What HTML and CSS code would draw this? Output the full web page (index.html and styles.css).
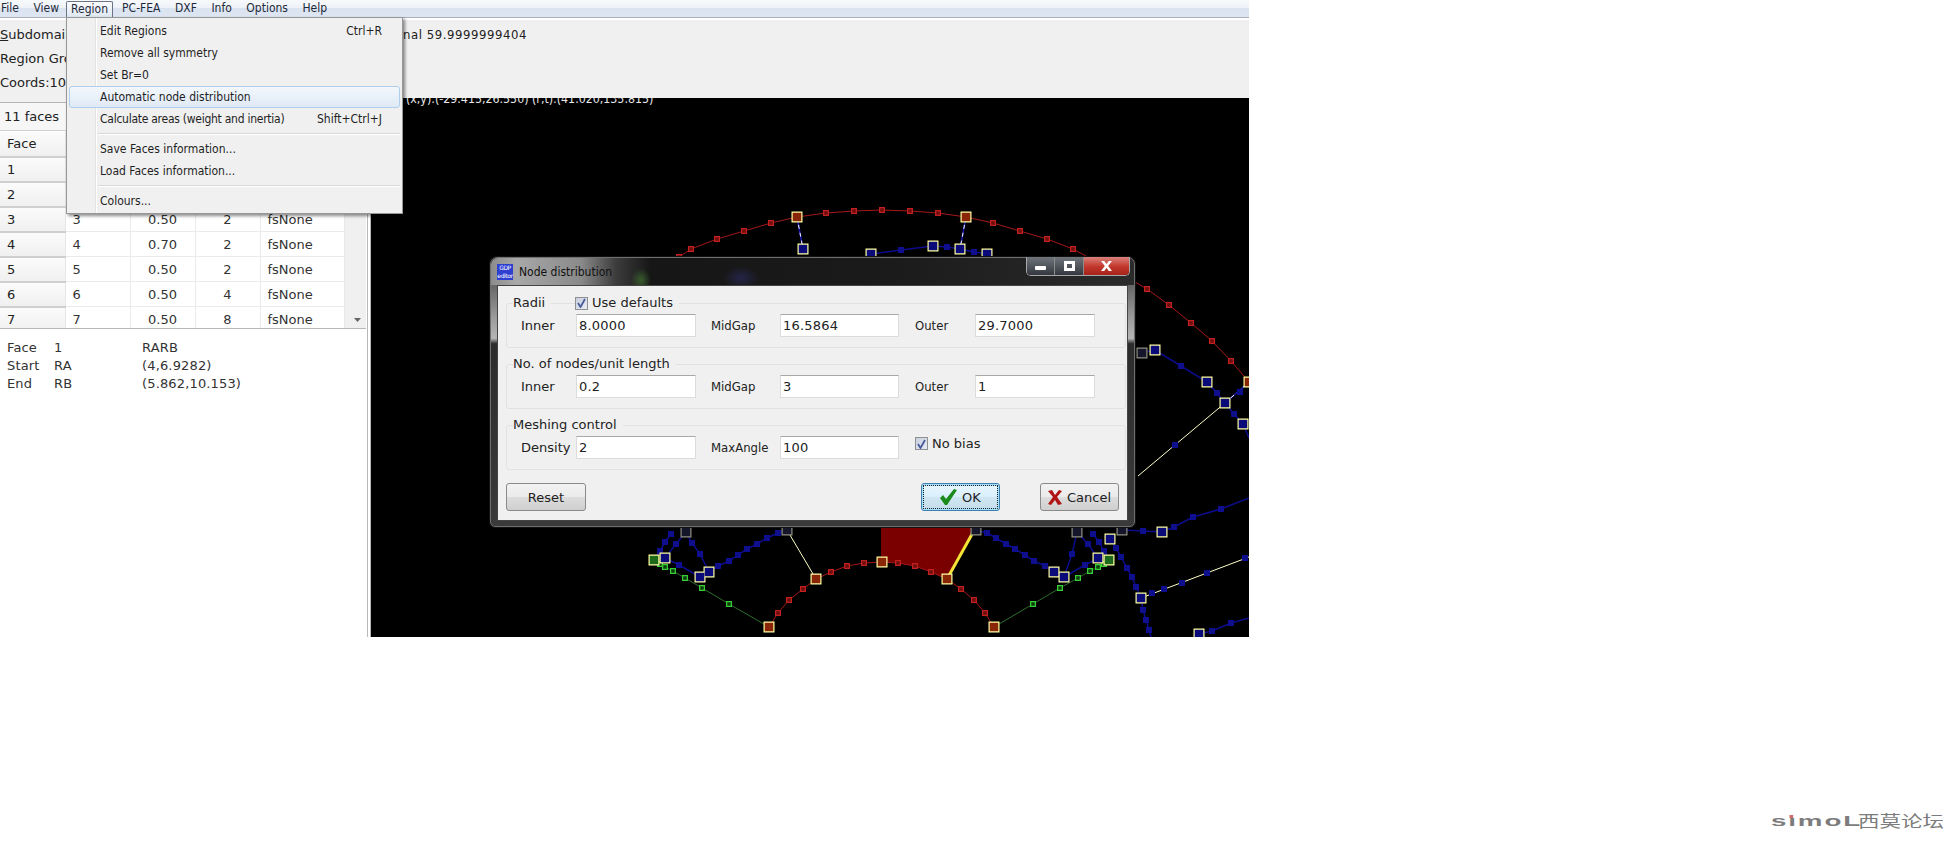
FILE: index.html
```html
<!DOCTYPE html>
<html lang="en">
<head>
<meta charset="utf-8">
<title>Node distribution</title>
<link rel="stylesheet" href="styles.css">
</head>
<body>
<div class="app">
  <nav class="menubar">
    <span class="mi">File</span><span class="mi">View</span><span class="mi active">Region</span><span class="mi">PC-FEA</span><span class="mi">DXF</span><span class="mi">Info</span><span class="mi">Options</span><span class="mi">Help</span>
  </nav>
  <section class="toppanel">
    <div class="toprow first"><span><u>S</u>ubdomains</span><span class="nominal">Nominal 59.9999999404</span></div>
    <div class="toprow">Region Groups</div>
    <div class="toprow">Coords:10</div>
  </section>
  <div class="work">
    <aside class="side">
      <div class="facecount">11 faces</div>
      <div class="gridwrap">
        <table class="grid">
          <tr class="hdr"><th>Face</th><td></td><td></td><td></td><td></td></tr>
          <tr><th>1</th><td>1</td><td class="c">0.50</td><td class="c">2</td><td>fsNone</td></tr>
          <tr><th>2</th><td>2</td><td class="c">0.50</td><td class="c">2</td><td>fsNone</td></tr>
          <tr><th>3</th><td>3</td><td class="c">0.50</td><td class="c">2</td><td>fsNone</td></tr>
          <tr><th>4</th><td>4</td><td class="c">0.70</td><td class="c">2</td><td>fsNone</td></tr>
          <tr><th>5</th><td>5</td><td class="c">0.50</td><td class="c">2</td><td>fsNone</td></tr>
          <tr><th>6</th><td>6</td><td class="c">0.50</td><td class="c">4</td><td>fsNone</td></tr>
          <tr><th>7</th><td>7</td><td class="c">0.50</td><td class="c">8</td><td>fsNone</td></tr>
        </table>
        <div class="scrollbar"><svg class="sc-arrow" width="7" height="4" viewBox="0 0 7 4"><path d="M0 0h7L3.500 4z"/></svg></div>
      </div>
      <div class="info">
        <span>Face</span><span>1</span><span>RARB</span>
        <span>Start</span><span>RA</span><span>(4,6.9282)</span>
        <span>End</span><span>RB</span><span>(5.862,10.153)</span>
      </div>
    </aside>
    <div class="canvas">
      <div class="readout">(x,y):(-29.415,26.550) (r,t):(41.020,135.815)</div>
      <svg class="drawing" width="878" height="539" viewBox="371 98 878 539">
        <defs>
          <path id="smallRed" d="M679 257h0M691 249h0M717 239h0M744 231h0M771 223h0M826 213h0M854 211h0M882 210h0M910 211h0M938 213h0M993 223h0M1020 231h0M1047 239h0M1073 249h0M1147 289h0M1169 305h0M1191 323h0M1212 341h0M1231 361h0M778 613h0M789 600h0M803 589h0M831 572h0M847 566h0M864 563h0M898 563h0M915 566h0M931 572h0M961 589h0M974 600h0M985 613h0"/>
          <path id="smallGreen" d="M729 604h0M702 588h0M685 578h0M673 571h0M665 567h0M660 564h0M656 561h0M1033 604h0M1060 588h0M1078 578h0M1090 571h0M1098 567h0M1104 564h0"/>
          <path id="smallBlue" d="M901 250h0M947 247h0M974 252h0M1181 366h0M1217 393h0M1234 414h0M1240 392h0M1175 445h0M1174 527h0M1193 517h0M1221 509h0M1143 531h0M1116 548h0M1121 557h0M1127 568h0M1132 577h0M1136 587h0M1143 610h0M1146 620h0M1149 630h0M1152 593h0M1164 589h0M1182 583h0M1207 573h0M1245 558h0M1212 631h0M1231 623h0M718 566h0M729 561h0M738 555h0M747 549h0M757 544h0M767 538h0M778 533h0M679 565h0M692 543h0M700 554h0M676 544h0M671 534h0M665 542h0M660 551h0M987 533h0M996 538h0M1006 544h0M1015 549h0M1025 555h0M1034 561h0M1045 566h0M1088 544h0M1093 534h0M1099 542h0M1104 551h0M1072 554h0M1085 565h0"/>
          <path id="bigBlue" d="M803 249h0M960 249h0M871 254h0M933 246h0M987 254h0M1155 350h0M1207 382h0M1225 403h0M1243 424h0M1162 532h0M1110 539h0M1141 598h0M1199 634h0M665 558h0M700 577h0M709 572h0M1054 572h0M1064 577h0M1098 558h0"/>
          <path id="bigRed" d="M797 217h0M966 217h0M1249 382h0M769 627h0M816 579h0M882 562h0M947 579h0M994 627h0"/>
          <path id="bigGreen" d="M654 560h0M1109 560h0"/>
          <path id="bigGrey" d="M1142 353h0M686 532h0M787 530h0M976 530h0M1077 532h0M1122 530h0"/>
        </defs>
        <path class="fillred" d="M881 527V562L898 563 915 566 931 572 947 579 975 527Z"/>
        <path class="ln red" d="M679 257L691 249 717 239 744 231 771 223 797 217 826 213 854 211 882 210 910 211 938 213 966 217 993 223 1020 231 1047 239 1073 249 1086 256M1135 282L1147 289 1169 305 1191 323 1212 341 1231 361 1249 382M769 627L778 613 789 600 803 589 816 579 831 572 847 566 864 563 882 562 898 563 915 566 931 572 947 579 961 589 974 600 985 613 994 627"/>
        <path class="ln green" d="M769 627L729 604 702 588 685 578 673 571 665 567 660 564 654 560M994 627L1033 604 1060 588 1078 578 1090 571 1098 567 1104 564 1109 560"/>
        <path class="ln blue" d="M871 254L901 250 933 246 947 247 960 249 974 252 987 254M1142 353L1155 350 1181 366 1207 382 1217 393 1225 403 1234 414 1243 424 1249 438M1122 530L1143 531 1162 532 1174 527 1193 517 1221 509 1249 498M1110 539L1116 548 1121 557 1127 568 1132 577 1136 587 1141 598 1143 610 1146 620 1149 630 1151 637M1199 634L1212 631 1231 623 1249 618M709 572L718 566 729 561 738 555 747 549 757 544 767 538 778 533 787 530M686 532L692 543 700 554 709 572M665 558L679 565 700 577M686 532L676 544 665 558M654 560L660 551 665 542 671 534M976 530L987 533 996 538 1006 544 1015 549 1025 555 1034 561 1045 566 1054 572M1077 532L1072 554 1064 577M1077 532L1088 544 1098 558M1064 577L1085 565 1098 558M1110 560L1104 551 1099 542 1093 534"/>
        <path class="ln dashbase" d="M797 217L803 249M966 217L960 249M1225 403L1249 382"/>
        <path class="ln dash" d="M797 217L803 249M966 217L960 249M1225 403L1249 382"/>
        <path class="ln white" d="M1225 403L1138 476M1141 598L1249 557M787 530L816 579"/>
        <path class="ln thick" d="M976 527L947 579"/>
        <use class="s-out red" href="#smallRed"/><use class="s-in red" href="#smallRed"/>
        <use class="s-out green" href="#smallGreen"/><use class="s-in green" href="#smallGreen"/>
        <use class="s-out blue" href="#smallBlue"/><use class="s-in blue" href="#smallBlue"/>
        <use class="b-out" href="#bigBlue"/><use class="b-in blue" href="#bigBlue"/>
        <use class="b-out" href="#bigRed"/><use class="b-in red" href="#bigRed"/>
        <use class="b-out" href="#bigGreen"/><use class="b-in green" href="#bigGreen"/>
        <use class="b-out grey" href="#bigGrey"/><use class="b-in grey" href="#bigGrey"/>
      </svg>
    </div>
  </div>

  <div class="dropdown">
    <div class="dd"><span>Edit Regions</span><span>Ctrl+R</span></div>
    <div class="dd"><span>Remove all symmetry</span></div>
    <div class="dd"><span>Set Br=0</span></div>
    <div class="dd hot"><span>Automatic node distribution</span></div>
    <div class="dd"><span class="tight">Calculate areas (weight and inertia)</span><span>Shift+Ctrl+J</span></div>
    <div class="sep"></div>
    <div class="dd"><span>Save Faces information...</span></div>
    <div class="dd"><span>Load Faces information...</span></div>
    <div class="sep"></div>
    <div class="dd"><span>Colours...</span></div>
  </div>

  <div class="dialog">
    <div class="titlebar">
      <div class="appicon"><span>GDP</span><span>editor</span></div>
      <div class="title">Node distribution</div>
      <div class="winbtns">
        <div class="wb wb-min"><svg width="11" height="4" viewBox="0 0 11 4"><rect width="11" height="4" rx="1"/></svg></div>
        <div class="wb wb-max"><svg width="11" height="10" viewBox="0 0 11 10"><path fill-rule="evenodd" d="M0 0h11v10H0zM3 3v4h5V3z"/></svg></div>
        <div class="wb wb-close"><svg width="11" height="10" viewBox="0 0 11 10"><path d="M0 0h3.200L5.500 3 7.800 0H11L7.200 5 11 10H7.800L5.500 7 3.200 10H0L3.800 5z"/></svg></div>
      </div>
    </div>
    <div class="client">
      <fieldset class="group">
        <legend>Radii</legend>
        <label class="check over"><span class="box"><svg width="9" height="10" viewBox="0 0 9 10"><path d="M1 5l2.500 4L8 1"/></svg></span>Use defaults</label>
        <div class="form">
          <span>Inner</span><div class="field">8.0000</div>
          <span class="m">MidGap</span><div class="field">16.5864</div>
          <span class="o">Outer</span><div class="field">29.7000</div>
        </div>
      </fieldset>
      <fieldset class="group">
        <legend>No. of nodes/unit length</legend>
        <div class="form">
          <span>Inner</span><div class="field">0.2</div>
          <span class="m">MidGap</span><div class="field">3</div>
          <span class="o">Outer</span><div class="field">1</div>
        </div>
      </fieldset>
      <fieldset class="group">
        <legend>Meshing control</legend>
        <div class="form">
          <span>Density</span><div class="field">2</div>
          <span class="m">MaxAngle</span><div class="field">100</div>
          <label class="check nobias"><span class="box"><svg width="9" height="10" viewBox="0 0 9 10"><path d="M1 5l2.500 4L8 1"/></svg></span>No bias</label>
        </div>
      </fieldset>
      <div class="buttons">
        <button class="btn reset">Reset</button>
        <button class="btn ok"><svg width="17" height="16" viewBox="0 0 17 16"><path class="ic-ok" d="M0 9l3-3 3 4 8-10 3 1-10 15H5z"/></svg>OK</button>
        <button class="btn cancel"><svg width="14" height="15" viewBox="0 0 14 15"><path class="ic-x" d="M0 1l4-1 3 5 4-5 3 1-5 6 5 7-4 1-3-5-4 5-3-1 5-7z"/></svg>Cancel</button>
      </div>
    </div>
  </div>
</div>
<footer class="foot">
  <div class="logo"><span class="lat">s<i class="idot">ı</i>moL</span><span class="cjk">西莫论坛</span></div>
</footer>
</body>
</html>
```

FILE: styles.css
```css
* { box-sizing: border-box; }
html, body { margin: 0; background: #fff; }
body { font-family: "DejaVu Sans", sans-serif; font-size: 13px; color: #222; width: 1958px; height: 842px; overflow: hidden; }
.app { position: relative; width: 1249px; height: 637px; display: flex; flex-direction: column; overflow: hidden; background: #f0f0f0; }

.menubar { height: 18px; flex: none; display: flex; background: linear-gradient(#f7f9fc, #eef2f8 45%, #dae3f0 50%, #dee6f2); border-bottom: 1px solid #a9aebb; padding-left: 1px; font-size: 12px; font-stretch: condensed; color: #1e2a3a; }
.mi { height: 16px; line-height: 16px; margin-right: 14.500px; }
.mi.active { margin: 1px 9px 0 -7.500px; width: 47px; text-align: center; height: 16px; border: 1px solid #6b7486; border-bottom: 0; border-radius: 2px 2px 0 0; background: linear-gradient(#fbfcfe, #dfe7f2); line-height: 14px; }

.toppanel { height: 80px; flex: none; background: #f0f0f0; border-top: 2px solid #fff; font-size: 13px; padding-top: 5px; color: #222; }
.toprow { height: 24px; line-height: 20px; }
.toprow.first { display: flex; justify-content: space-between; width: 527px; }
.nominal { font-stretch: condensed; letter-spacing: .55px; }

.work { flex: 1; display: flex; min-height: 0; }
.side { width: 371px; flex: none; background: #fff; border-right: 4px double #b8b8b8; padding-right: 1px; display: flex; flex-direction: column; box-shadow: inset 0 4px 0 #f0f0f0; }
.facecount { margin-top: 4px; height: 29px; line-height: 27px; padding-left: 4px; background: #f6f6f6; border-top: 1px solid #b6b6b6; border-bottom: 1px solid #d0d0d0; flex: none; }
.gridwrap { width: 366px; height: 198px; flex: none; position: relative; overflow: hidden; border-bottom: 1px solid #b8b8b8; }
.grid { border-collapse: collapse; table-layout: fixed; width: 344px; }
.grid th { width: 65px; font-weight: 400; text-align: left; padding: 0 0 0 7px; background: linear-gradient(#fbfbfb, #f0f0f0); border-bottom: 2px solid #cfcfcf; border-right: 1px solid #e6e6e6; }
.grid td { width: 65px; border: 1px solid #ebebeb; border-left: 0; padding: 0 0 0 7px; background: #fff; color: #333; }
.grid td:last-child { width: 84px; border-right: 1px solid #e6e6e6; }
.grid td.c { text-align: center; padding: 0; }
.grid tr { height: 25px; }
.grid tr.hdr { height: 25px; }
.scrollbar { position: absolute; right: 0; top: 0; bottom: 0; width: 22px; background: #f0f0f0; border-left: 1px solid #e8e8e8; }
.sc-arrow { position: absolute; left: 9px; top: 187px; fill: #666; }
.info { display: grid; grid-template-columns: 47px 88px 1fr; grid-auto-rows: 18px; padding: 10px 0 0 7px; line-height: 18px; color: #333; letter-spacing: .15px; }

.canvas { position: relative; width: 878px; background: #000; overflow: hidden; }
.readout { position: absolute; left: 35px; top: -7px; color: #e8e8e8; font-size: 12.300px; font-stretch: condensed; line-height: 16px; white-space: nowrap; }
.drawing { display: block; }
.drawing .fillred { fill: #7a0000; }
.ln { fill: none; stroke-width: 1; }
.ln.red { stroke: #a51818; }
.ln.green { stroke: #2d6e2d; }
.ln.blue { stroke: #0c0c8c; stroke-width: 1.500; }
.ln.white { stroke: #ffffc8; }
.ln.dashbase { stroke: #1818b0; stroke-width: 1.500; }
.ln.dash { stroke: #f4f4ff; stroke-dasharray: 4 4; }
.ln.thick { stroke: #f4e234; stroke-width: 3; }
.s-out, .s-in, .b-out, .b-in { fill: none; stroke-linecap: square; }
.s-out { stroke-width: 6px; }
.s-in { stroke-width: 3.500px; }
.s-out.red { stroke: #c02020; } .s-in.red { stroke: #6d0e0e; }
.s-out.green { stroke: #36d036; } .s-in.green { stroke: #0e3a0e; }
.s-out.blue { stroke: #0e0e90; } .s-in.blue { stroke: #10108a; }
.b-out { stroke: #ffffa0; stroke-width: 11px; }
.b-in { stroke-width: 8.600px; }
.b-in.blue { stroke: #0a0a78; }
.b-in.red { stroke: #8a2608; }
.b-in.green { stroke: #1d6a1d; }
.b-out.grey { stroke: #8f8f80; }
.b-in.grey { stroke: #16162a; }

.dropdown { position: absolute; left: 66px; top: 17px; width: 337px; height: 197px; background: #f0f0f0; border: 1px solid #979797; box-shadow: 2px 2px 3px rgba(0,0,0,.45); padding: 2px; font-size: 12px; font-stretch: condensed; color: #1f1f1f; }
.dropdown::before { content: ""; position: absolute; left: 28px; top: 0; bottom: 0; width: 1px; background: #e2e3e3; box-shadow: 1px 0 0 #fff; }
.dd { position: relative; height: 22px; line-height: 20px; display: flex; justify-content: space-between; padding: 0 17px 0 30px; border: 1px solid transparent; }
.dd.hot { border-color: #aeceee; border-radius: 3px; background: linear-gradient(#f3f7fc, #dfeaf6); }
.tight { letter-spacing: -.26px; }
.sep { position: relative; height: 2px; margin: 3px 0 3px 29px; border-top: 1px solid #d8d8d8; border-bottom: 1px solid #fff; }

.dialog { position: absolute; left: 490px; top: 257px; width: 645px; height: 270px; border-radius: 7px 7px 5px 5px; padding: 0 6px 5px; background: linear-gradient(#3a3a3a 0, #9a9a9a 22%, #b5b5b5 30%, #2c2c2c 32%, #3a3a3a 100%); border: 1px solid #6e6e6e; box-shadow: 0 0 0 1px #111; display: flex; flex-direction: column; }
.titlebar { height: 27px; flex: none; margin: 0 -6px; position: relative; display: flex; align-items: center; padding-left: 6px; border-radius: 7px 7px 0 0; background:
  radial-gradient(ellipse 10px 12px at 150px 22px, rgba(70,130,50,.6), transparent),
  radial-gradient(ellipse 18px 12px at 250px 20px, rgba(50,50,120,.5), transparent),
  linear-gradient(90deg, #8c8c8c 0, #a8a8a8 25px, #8a8a8a 90px, #3c3c3c 125px, #161616 160px, #1a1a1a 60%, #2b2b2b 100%); }
.appicon { width: 16px; height: 16px; background: #2f3fd0; display: flex; flex-direction: column; align-items: center; color: #fff; font-size: 6px; line-height: 8px; letter-spacing: -.4px; overflow: hidden; flex: none; }
.title { margin-left: 6px; font-size: 12px; font-stretch: condensed; color: #111; line-height: 16px; }
.winbtns { position: absolute; top: -1px; right: 4px; display: flex; height: 19px; border: 1px solid #a8a8a8; border-top: 0; border-radius: 0 0 5px 5px; overflow: hidden; }
.wb { display: flex; align-items: center; justify-content: center; height: 100%; fill: #fff; }
.wb-min { width: 27px; background: linear-gradient(#70757c, #34383e); padding-top: 3px; }
.wb-max { width: 29px; background: linear-gradient(#70757c, #34383e); border-left: 1px solid #8a8a8a; }
.wb-close { width: 46px; background: linear-gradient(#d8827a, #c2352a 55%, #a4241c); border-left: 1px solid #8a8a8a; }
.client { flex: 1; background: #f0f0f0; border: 1px solid #444; padding: 9px 4px 0 8px; display: flex; flex-direction: column; }
.group { position: relative; margin: 0 0 8px; padding: 3px 0 10px 14px; border: 1px solid #e2e2e2; border-radius: 3px; min-width: 0; width: 620px; height: 53px; }
.group legend { margin-left: -8px; padding: 0 6px 0 0; line-height: 16px; height: 16px; }
.form { display: grid; grid-template-columns: 55px 120px 84px 119px 76px 120px; align-items: center; height: 23px; color: #222; }
.form .m { padding-left: 15px; font-stretch: condensed; }
.form .o { padding-left: 16px; font-stretch: condensed; }
.field { height: 23px; line-height: 22px; background: #fff; border: 1px solid #dcdcdc; border-top-color: #a8a8a8; padding-left: 2px; letter-spacing: .2px; }
.check { display: flex; align-items: center; gap: 4px; line-height: 16px; }
.check.over { position: absolute; left: 68px; top: -16px; background: #f0f0f0; padding-right: 6px; }
.nobias { grid-column: 5 / 7; padding-left: 16px; margin-top: -8px; gap: 4px; }
.box { width: 13px; height: 13px; flex: none; background: linear-gradient(135deg, #c8cfe0, #e8ecf4); border: 1px solid #8e8f8f; display: flex; align-items: center; justify-content: center; }
.box path { fill: none; stroke: #4a5c9a; stroke-width: 1.800; }
.buttons { display: flex; margin-top: 5px; width: 613px; }
.btn { width: 80px; height: 28px; font: 13px "DejaVu Sans", sans-serif; color: #222; background: linear-gradient(#f2f2f2 0, #ebebeb 48%, #dcdcdc 52%, #cfcfcf 100%); border: 1px solid #8a8a8a; border-radius: 3px; padding: 0; display: flex; align-items: center; justify-content: center; gap: 5px; }
.btn.ok { margin-left: auto; margin-right: 40px; width: 79px; border: 1px solid #3c7fb1; outline: 1px dotted #222; outline-offset: -3px; box-shadow: inset 0 0 0 2px #a8e0f8; background: linear-gradient(#eaf6fd, #d9f0fc 48%, #cfe6f2 52%, #c4dcea); }
.btn.cancel { width: 79px; }
.ic-ok { fill: #1a8a1a; }
.ic-x { fill: #b01414; }

.foot { height: 205px; display: flex; justify-content: flex-end; align-items: flex-start; padding: 174px 14px 0 0; }
.logo { display: flex; align-items: center; height: 20px; color: #7c7c7c; }
.lat { display: inline-block; width: 87px; font: 700 15px/20px "Liberation Sans", sans-serif; letter-spacing: 1px; transform-origin: left center; transform: scaleX(1.850); white-space: nowrap; }
.idot { font-style: normal; position: relative; }
.idot::after { content: ""; position: absolute; left: 1px; top: 3px; width: 2px; height: 3px; background: #d06a6a; }
.cjk { font: 400 21.500px/20px "Noto Sans CJK SC", sans-serif; transform: scaleY(.72); white-space: nowrap; }
```
